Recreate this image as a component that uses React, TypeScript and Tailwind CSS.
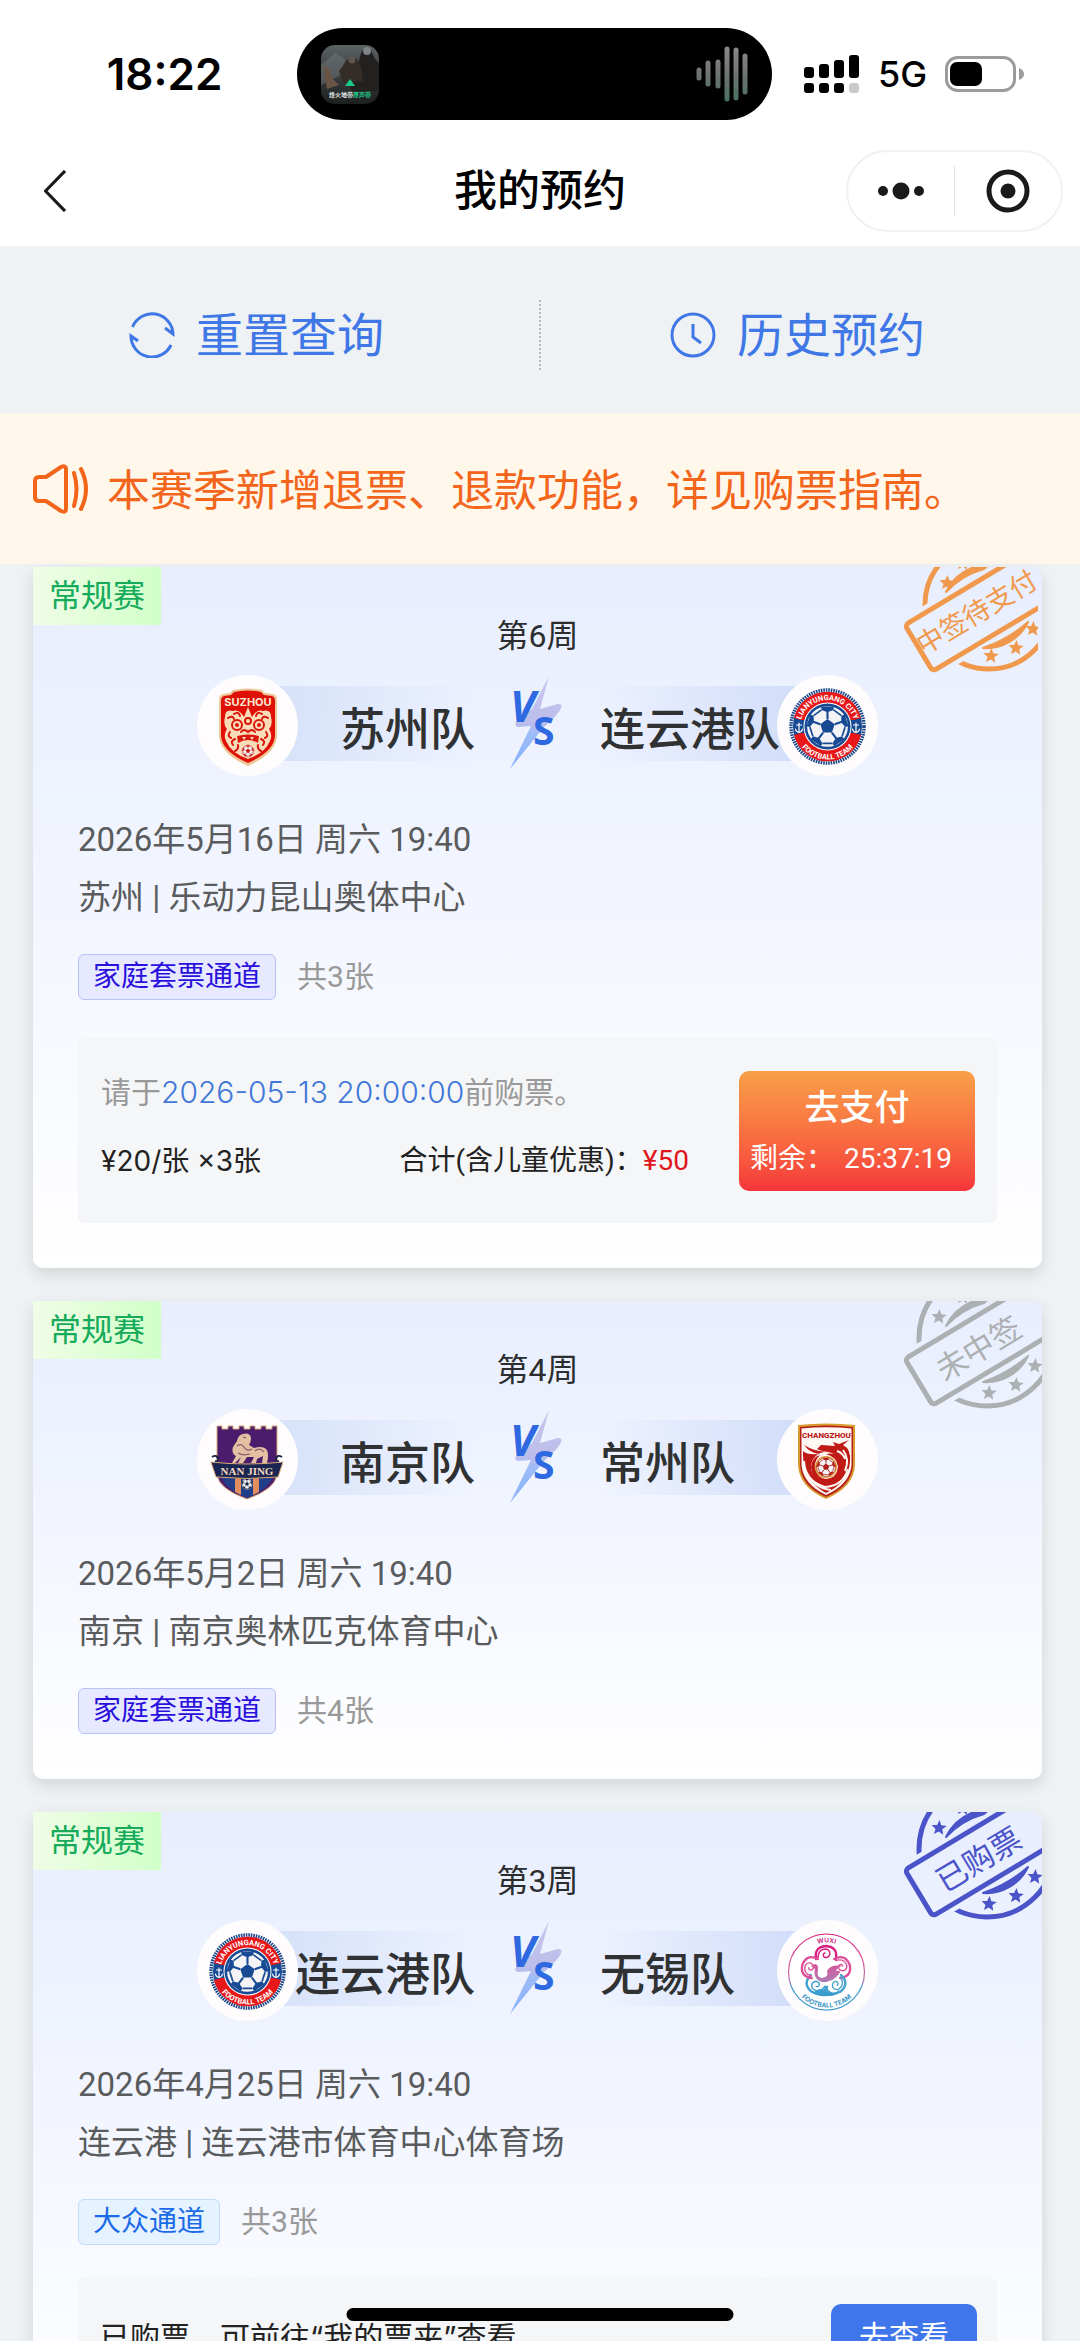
import React from "react";

type Team = "suzhou" | "lianyungang" | "nanjing" | "changzhou" | "wuxi";

const TEAM_NAMES: Record<Team, string> = {
  suzhou: "苏州队",
  lianyungang: "连云港队",
  nanjing: "南京队",
  changzhou: "常州队",
  wuxi: "无锡队",
};

/* ---------- Small drawings ---------- */

function Star({ x, y, r = 8 }: { x: number; y: number; r?: number }) {
  const pts = Array.from({ length: 10 }, (_, i) => {
    const a = ((-90 + 4 + i * 36) * Math.PI) / 180;
    const d = i % 2 ? r * 0.45 : r;
    return `${(x + d * Math.cos(a)).toFixed(1)},${(y + d * Math.sin(a)).toFixed(1)}`;
  });
  return <polygon points={pts.join(" ")} />;
}

function Ball({ cx, cy, r, ink }: { cx: number; cy: number; r: number; ink: string }) {
  const at = (d: number, deg: number) => {
    const a = (deg * Math.PI) / 180;
    return `${(cx + d * Math.cos(a)).toFixed(2)},${(cy + d * Math.sin(a)).toFixed(2)}`;
  };
  const dirs = [-90, -18, 54, 126, 198];
  return (
    <g>
      <circle cx={cx} cy={cy} r={r} fill="#f4f4f6" stroke={ink} strokeWidth={r * 0.06} />
      <polygon points={dirs.map((d) => at(r * 0.36, d)).join(" ")} fill={ink} />
      {dirs.map((d) => (
        <g key={d}>
          <polyline points={`${at(r * 0.36, d)} ${at(r * 0.72, d)}`} stroke={ink} strokeWidth={r * 0.1} fill="none" />
          <polygon
            points={`${at(r * 0.68, d)} ${at(r * 0.84, d + 20)} ${at(r, d + 17)} ${at(r, d - 17)} ${at(r * 0.84, d - 20)}`}
            fill={ink}
          />
          <polyline
            points={`${at(r * 0.84, d + 20)} ${at(r * 0.84, d + 52)}`}
            stroke={ink}
            strokeWidth={r * 0.08}
            fill="none"
          />
        </g>
      ))}
    </g>
  );
}

function SuzhouBadge() {
  return (
    <svg viewBox="0 0 101 101" className="size-full" role="img" aria-label="苏州">
      <path
        d="M36 15 Q50 12 65 15 L68 18 L76 19 Q80 20 80 25 V60 Q80 78 51 91 Q22 78 22 60 V25 Q22 20 26 19 L33 18 Z"
        fill="#ecc694"
      />
      <path
        d="M37 17 Q50 14 64 17 L67 20 L75 21 Q78 22 78 26 V60 Q78 76 51 88 Q24 76 24 60 V26 Q24 22 27 21 L34 20 Z"
        fill="#df1008"
      />
      <text x="51" y="31" textAnchor="middle" fontSize="11" fontWeight="700" fill="#fbe8cf" fontFamily="Inter">
        SUZHOU
      </text>
      <path
        d="M51 32 L55 42 Q60 34 66 36 Q74 34 74 42 Q76 50 72 54 Q76 60 73 66 Q68 78 51 84 Q34 78 29 66 Q26 60 30 54 Q26 50 28 42 Q28 34 36 36 Q42 34 47 42 Z"
        fill="#fbdcb8"
      />
      <g fill="none" stroke="#d8180c" strokeWidth="2" strokeLinecap="round">
        <circle cx="40" cy="50" r="5" />
        <circle cx="62" cy="50" r="5" />
        <circle cx="51" cy="46" r="3" />
        <path d="M31 43 Q36 40 37 44 M71 43 Q66 40 65 44 M37 39 Q42 36 43 41 M65 39 Q60 36 59 41" />
        <path d="M44 57 Q47 53 51 57 Q55 53 58 57 M33 57 Q30 61 34 63 M69 57 Q72 61 68 63" />
        <path d="M36 70 Q33 66 38 64 M66 70 Q69 66 64 64 M38 76 Q42 74 41 70 M64 76 Q60 74 61 70" />
      </g>
      <circle cx="40" cy="50" r="2" fill="#d8180c" />
      <circle cx="62" cy="50" r="2" fill="#d8180c" />
      <path d="M40 61 Q51 58 62 61 L61 68 Q51 62 41 68 Z" fill="#d8180c" />
      <path d="M45 62 l2 3 l2 -3 z M53 62 l2 3 l2 -3 z" fill="#fbdcb8" />
      <Ball cx={51} cy={76} r={6} ink="#c4150c" />
    </svg>
  );
}

function LianyungangBadge({ id }: { id: string }) {
  return (
    <svg viewBox="0 0 101 101" className="size-full" role="img" aria-label="连云港">
      <defs>
        <path id={`${id}-top`} d="M24 60 A27.500 27.500 0 1 1 77 60" />
        <path id={`${id}-bottom`} d="M17.500 51.500 A33 33 0 0 0 83.500 51.500" />
      </defs>
      <circle cx="50.500" cy="51.500" r="38.500" fill="#fff" />
      <circle cx="50.500" cy="51.500" r="36.500" fill="none" stroke="#1b4688" strokeWidth="3.500" strokeDasharray="1.600 0.900" />
      <circle cx="50.500" cy="51.500" r="34.500" fill="#164a94" />
      <path d="M17 43 A34.500 34.500 0 0 1 84 43 L77 45 H24 Z M17 60 A34.500 34.500 0 0 0 84 60 L77 58 H24 Z" fill="#e81719" />
      <circle cx="50.500" cy="51.500" r="24" fill="#fff" />
      <circle cx="50.500" cy="51.500" r="23" fill="#164a94" />
      <Ball cx={50.5} cy={51.5} r={21} ink="#174a93" />
      <g fill="#fff" fontFamily="Roboto" fontWeight="700">
        <text fontSize="7.500">
          <textPath href={`#${id}-top`} startOffset="50%" textAnchor="middle">
            LIANYUNGANG CITY
          </textPath>
        </text>
        <text fontSize="7.500">
          <textPath href={`#${id}-bottom`} startOffset="50%" textAnchor="middle">
            FOOTBALL TEAM
          </textPath>
        </text>
      </g>
      <g fill="none" stroke="#fff" strokeWidth="1.200" strokeLinecap="round">
        <path d="M22 48 V57 M19.500 50 H24.500 M18.500 54 Q19 57 22 57.500 Q25 57 25.500 54" />
        <path d="M79 48 V57 M76.500 50 H81.500 M75.500 54 Q76 57 79 57.500 Q82 57 82.500 54" />
      </g>
    </svg>
  );
}

function NanjingBadge() {
  return (
    <svg viewBox="0 0 101 101" className="size-full" role="img" aria-label="南京">
      <path
        d="M20 17 H25 V20 H31 V17 H36 V20 H42 V17 H47 V20 H53 V17 H58 V20 H64 V17 H69 V20 H75 V17 H80 V66 Q78 80 50 90 Q22 80 20 66 Z"
        fill="#4b1c6b"
        stroke="#d8a878"
        strokeWidth="1"
      />
      <path d="M24 66 H76 Q74 79 50 89 Q26 79 24 66 Z" fill="#213f88" />
      <path d="M38 66 H44 V86 L38 83 Z M56 66 H62 V83 L56 86 Z" fill="#e08e5e" />
      <Ball cx={50} cy={75} r={5.5} ink="#17233f" />
      <path
        d="M35 54 L39 47 Q34 44 36 38 L40 32 Q41 26 46 25 Q53 23 54 29 Q54 33 52 36 L57 39 Q66 36 70 41 Q72 46 70 54 H65 L66 47 L60 50 L59 54 H54 L57 48 H50 L46 54 H41 L44 48 L38 54 Z"
        fill="#e3c0a2"
      />
      <path
        d="M40 37 Q44 34 47 38 Q50 43 55 40 M46 28 L49 29 M58 42 Q63 38 67 43 M41 44 Q46 47 53 45"
        fill="none"
        stroke="#84596c"
        strokeWidth="1.200"
      />
      <path d="M15 48 Q20 45 21 50 Q21 53 18 52 M85 48 Q80 45 79 50 Q79 53 82 52" fill="none" stroke="#1a2348" strokeWidth="2" />
      <path d="M14 53 Q50 57 86 53 L81 68 Q50 71 19 68 Z" fill="#1b2551" stroke="#d8a878" strokeWidth="1" />
      <text x="50" y="66" textAnchor="middle" fontSize="11" fontWeight="700" fill="#f3d8bd" fontFamily="Liberation Serif">
        NAN JING
      </text>
    </svg>
  );
}

function ChangzhouBadge() {
  return (
    <svg viewBox="0 0 101 101" className="size-full" role="img" aria-label="常州">
      <path d="M21 16 Q49 13 78 16 V56 Q77 78 49 90 Q22 78 21 56 Z" fill="#d99a2e" />
      <path d="M23 18 Q49 15 76 18 V56 Q75 77 49 88 Q24 77 23 56 Z" fill="#b6201c" />
      <path d="M24.500 19.500 Q49 17 74.500 19.500 V56 Q73 75 49 86 Q26 75 24.500 56 Z" fill="#fff8f4" />
      <text x="49.500" y="29" textAnchor="middle" fontSize="8" fontWeight="800" fill="#ba1714" fontFamily="Roboto">
        CHANGZHOU
      </text>
      <path
        d="M26 47 Q27 72 49 84 Q72 73 73 52 Q74 40 66 36 L72 31 L62 35 L56 33 L58 37 L44 36 L40 40 L45 42 L52 42 Q40 44 27 36 Q33 44 42 45 Q30 46 26 42 Z"
        fill="#c01a17"
      />
      <circle cx="49" cy="58" r="15" fill="#fff8f4" />
      <path
        d="M49 45 Q63 42 66 56 Q66 72 50 74 Q35 73 34 58 Q35 48 43 46 Q37 52 38 59 Q40 69 49 70 Q60 69 61 58 Q60 48 49 45 Z"
        fill="#c01a17"
      />
      <path
        d="M27 52 Q28 72 48 78 Q66 77 71 60 M28 60 Q36 79 54 81 M66 41 Q73 50 68 62 M60 42 Q66 44 68 50"
        fill="none"
        stroke="#fff8f4"
        strokeWidth="2"
      />
      <circle cx="49" cy="58" r="11" fill="#e0a23c" />
      <Ball cx={49} cy={58} r={9.5} ink="#b3211c" />
    </svg>
  );
}

function WuxiBadge() {
  const petals: [number, number, number, string][] = [
    [49, 34, 0, "#d92080"],
    [65, 47, 72, "#de4f97"],
    [59, 65, 144, "#4aa3cf"],
    [39, 65, 216, "#3f9fce"],
    [33, 47, 288, "#de4f97"],
  ];
  return (
    <svg viewBox="0 0 101 101" className="size-full" role="img" aria-label="无锡">
      <defs>
        <linearGradient id="wuxi-ink" gradientUnits="userSpaceOnUse" x1="0" y1="14" x2="0" y2="90">
          <stop offset="0" stopColor="#d81b7c" />
          <stop offset="0.350" stopColor="#df4c94" />
          <stop offset="0.620" stopColor="#b07ab4" />
          <stop offset="0.700" stopColor="#3fa0cf" />
          <stop offset="1" stopColor="#2c8fc4" />
        </linearGradient>
        <path id="wuxi-top" d="M20 52 A29.500 29.500 0 0 1 79 52" />
        <path id="wuxi-bottom" d="M14 52 A35.500 35.500 0 0 0 85 52" />
      </defs>
      <circle cx="49.500" cy="52" r="38" fill="#fff" stroke="url(#wuxi-ink)" strokeWidth="1.200" />
      <g fill="none" strokeLinecap="round">
        {petals.map(([x, y, a, color]) => (
          <g key={a} transform={`translate(${x} ${y}) rotate(${a})`} stroke={color}>
            <path d="M-10 5 Q-12 -7 0 -8 Q12 -7 10 5" strokeWidth="2.400" />
            <path d="M-8 4 Q-8 -5 0 -5 Q4 -4 4 0 Q2 5 -2 3 Q-4 0 -1 -1" strokeWidth="1.400" />
          </g>
        ))}
      </g>
      <path
        d="M34 46 L38 44 Q42 45 41 50 Q39 57 45 58 Q52 57 50 51 Q54 44 65 46 Q60 48 59 51 Q66 50 61 55 Q57 60 52 61 Q46 64 41 60 Q36 56 38 49 Z"
        fill="url(#wuxi-ink)"
      />
      <path d="M36 73 Q43 66 49 71 Q57 76 63 69 Q60 77 50 76 Q42 77 36 73 Z" fill="url(#wuxi-ink)" />
      <g fontFamily="Inter" fontWeight="700" fontSize="6.500">
        <text fill="#cf2d86">
          <textPath href="#wuxi-top" startOffset="50%" textAnchor="middle">
            WUXI
          </textPath>
        </text>
        <text fill="#3a93c6">
          <textPath href="#wuxi-bottom" startOffset="50%" textAnchor="middle">
            FOOTBALL TEAM
          </textPath>
        </text>
      </g>
    </svg>
  );
}

function TeamBadge({ team, id }: { team: Team; id: string }) {
  return (
    <div className="relative z-10 size-[101px] shrink-0 rounded-full bg-[#fefcfd]">
      {team === "suzhou" && <SuzhouBadge />}
      {team === "lianyungang" && <LianyungangBadge id={id} />}
      {team === "nanjing" && <NanjingBadge />}
      {team === "changzhou" && <ChangzhouBadge />}
      {team === "wuxi" && <WuxiBadge />}
    </div>
  );
}

function Versus() {
  return (
    <svg viewBox="0 0 100 110" className="mb-1 h-[110px] w-[100px] shrink-0 self-center" role="img" aria-label="VS">
      <defs>
        <linearGradient id="bolt" x1="0" y1="0" x2="0" y2="1">
          <stop offset="0" stopColor="#c9c6ee" />
          <stop offset="0.500" stopColor="#bcbdea" />
          <stop offset="0.620" stopColor="#9dbcf8" />
          <stop offset="1" stopColor="#86b0fb" />
        </linearGradient>
      </defs>
      <path
        d="M61 7 L52 40 L70 35 Q75 35 73 39 Q71 45 56 58 L22 100 L43 57 L30 58 Q26 57 28 53 L44 40 Z"
        fill="url(#bolt)"
      />
      <g fill="#2f69e1" fontFamily="Noto Sans" fontWeight="700">
        <text x="22" y="53" fontSize="43" fontStyle="italic">
          V
        </text>
        <text x="45" y="76" fontSize="39">
          S
        </text>
      </g>
    </svg>
  );
}

type StampKind = "pending" | "lost" | "bought";

const STAMPS: Record<StampKind, { text: string; color: string; size: number; cx: number; cy: number; r: number }> = {
  pending: { text: "中签待支付", color: "#f0994d", size: 27, cx: 85, cy: 38, r: 64 },
  lost: { text: "未中签", color: "#adb0b2", size: 31, cx: 83, cy: 37, r: 68 },
  bought: { text: "已购票", color: "#4a54c8", size: 31, cx: 83, cy: 37, r: 68 },
};

function Stamp({ kind }: { kind: StampKind }) {
  const s = STAMPS[kind];
  const pending = kind === "pending";
  return (
    <svg
      viewBox={pending ? "0 0 134 110" : "0 0 138 110"}
      className={
        pending ? "absolute top-0 right-1 h-[110px] w-[134px]" : "absolute top-0 right-0 h-[110px] w-[138px]"
      }
      role="img"
      aria-label={s.text}
    >
      <mask id={`stamp-${kind}`}>
        <rect x="-50" y="-50" width="260" height="260" fill="#fff" />
        <rect x="-4" y="-7" width="200" height="68" fill="#000" transform="translate(1 58) rotate(-31)" />
      </mask>
      <g mask={`url(#stamp-${kind})`}>
        <circle cx={s.cx} cy={s.cy} r={s.r} fill="none" stroke={s.color} strokeWidth="5" />
      </g>
      <g fill={s.color}>
        <path d="M79 81 A46 46 0 0 0 124 55 A130 130 0 0 1 79 81 Z" stroke={s.color} strokeWidth="2" strokeLinejoin="round" />
        <path d="M42 25 Q54 0 87 -4 L80 2 Q58 8 42 25 Z" stroke={s.color} strokeWidth="2" strokeLinejoin="round" />
        <Star x={pending ? 43 : 35} y={16} />
        <Star x={pending ? 87 : 85} y={pending ? 89 : 92} />
        <Star x={112} y={pending ? 81 : 84} />
        <Star x={pending ? 129 : 131} y={pending ? 62 : 65} />
        <Star x={59} y={-4} />
      </g>
      <rect
        x="0"
        y="0"
        width="180"
        height="54"
        rx="4"
        transform="translate(1 58) rotate(-31)"
        fill="none"
        stroke={s.color}
        strokeWidth="5"
      />
      <text
        transform={`translate(${pending ? 73 : 75} ${pending ? 46 : 48}) rotate(-31)`}
        textAnchor="middle"
        dominantBaseline="central"
        fontSize={s.size}
        fill={s.color}
      >
        {s.text}
      </text>
    </svg>
  );
}

/* ---------- Header ---------- */

function StatusBar() {
  return (
    <div className="flex h-[92px] items-center pr-[11px]">
      <div className="flex-1 pl-8 text-center font-['Inter'] text-[44px] leading-none font-semibold">18:22</div>
      <div className="flex h-full w-[475px] items-center justify-between rounded-full bg-black pr-[22px] pl-6">
        <svg viewBox="0 0 58 59" className="h-[59px] w-[58px] rounded-[14px]">
          <defs>
            <linearGradient id="cover" x1="0" y1="0" x2="0" y2="1">
              <stop offset="0" stopColor="#5a6264" />
              <stop offset="0.500" stopColor="#3c3f3f" />
              <stop offset="1" stopColor="#1b1f1e" />
            </linearGradient>
          </defs>
          <rect width="58" height="59" fill="url(#cover)" />
          <path d="M0 20 L14 8 L24 14 L20 30 L0 40 Z" fill="#6f7779" opacity="0.500" />
          <path d="M40 8 Q44 0 50 5 L54 14 L58 18 V46 H30 L28 30 L36 24 Z" fill="#23211f" />
          <path d="M24 18 Q28 10 36 14 L40 22 L42 36 L22 38 L18 26 Z" fill="#332c27" />
          <path d="M2 20 L8 24 L12 34 L18 40 L6 44 Z" fill="#6a5446" />
          <circle cx="46" cy="6" r="4" fill="#7c8485" />
          <circle cx="31" cy="15" r="3.500" fill="#5f574f" />
          <path d="M29 34 L34 41 H24 Z" fill="#19c98a" />
          <text x="29" y="52" textAnchor="middle" fontSize="6" fontWeight="700" fill="#e8eeec">
            烽火地带
            <tspan fill="#1fd08f">原声带</tspan>
          </text>
        </svg>
        <svg viewBox="0 0 54 56" className="h-[56px] w-[54px]">
          <defs>
            <linearGradient id="wave" gradientUnits="userSpaceOnUse" x1="0" y1="0" x2="0" y2="56">
              <stop offset="0" stopColor="#8a8a88" />
              <stop offset="0.500" stopColor="#6f7371" />
              <stop offset="1" stopColor="#46705c" />
            </linearGradient>
          </defs>
          <g stroke="url(#wave)" strokeWidth="5" strokeLinecap="round">
            <path d="M3 24 V32" />
            <path d="M12 17 V38" />
            <path d="M22 16 V40" />
            <path d="M31 3 V53" />
            <path d="M40 4 V52" />
            <path d="M49 10 V46" />
          </g>
        </svg>
      </div>
      <div className="flex flex-1 items-center gap-[18px] pl-8">
        <svg viewBox="0 0 56 38" className="h-[38px] w-14" role="img" aria-label="信号">
          <g fill="#000">
            <rect x="0" y="12" width="10" height="11" rx="3" />
            <rect x="15" y="9" width="10" height="14" rx="3" />
            <rect x="30" y="5" width="10" height="18" rx="3" />
            <rect x="45" y="0" width="10" height="23" rx="3" />
            <rect x="0" y="28" width="10" height="10" rx="3" />
            <rect x="15" y="28" width="10" height="10" rx="3" />
            <rect x="30" y="28" width="10" height="10" rx="3" />
          </g>
          <rect x="45" y="28" width="10" height="10" rx="3" fill="#c9c9c9" />
        </svg>
        <span className="font-['Inter'] text-[36px] leading-none font-medium">5G</span>
        <svg viewBox="0 0 79 36" className="h-9 w-[79px]" role="img" aria-label="电量">
          <rect x="1.500" y="1.500" width="68" height="33" rx="11" fill="none" stroke="#9b9b9b" strokeWidth="3" />
          <rect x="5" y="6" width="32" height="24" rx="7" fill="#000" />
          <path d="M74 12 Q79 14 79 18 Q79 22 74 24 Z" fill="#9b9b9b" />
        </svg>
      </div>
    </div>
  );
}

function NavBar() {
  return (
    <div className="mt-[30px] grid grid-cols-[1fr_auto_1fr] items-center px-[17px]">
      <button type="button" aria-label="返回" className="justify-self-start pl-[26px]">
        <svg viewBox="0 0 24 42" className="h-[42px] w-6" fill="none" stroke="#1a1a1a" strokeWidth="3.200">
          <path d="M22 1 L2.500 21 L22 41" strokeLinejoin="round" />
        </svg>
      </button>
      <h1 className="text-[43px] leading-[60px] font-medium">我的预约</h1>
      <div className="flex h-[82px] w-[217px] items-center justify-self-end rounded-full border-2 border-[#f1f1f1]">
        <button type="button" aria-label="更多" className="flex flex-1 justify-center">
          <svg viewBox="0 0 48 18" className="h-[18px] w-12" fill="#1a1a1a">
            <circle cx="6" cy="9" r="5" />
            <circle cx="24" cy="9" r="8.500" />
            <circle cx="42" cy="9" r="5" />
          </svg>
        </button>
        <div className="h-[50px] w-px bg-[#e4e4e4]" />
        <button type="button" aria-label="关闭" className="flex flex-1 justify-center">
          <svg viewBox="0 0 44 44" className="size-11">
            <circle cx="22" cy="22" r="19" fill="none" stroke="#1a1a1a" strokeWidth="5" />
            <circle cx="22" cy="22" r="7.500" fill="#1a1a1a" />
          </svg>
        </button>
      </div>
    </div>
  );
}

function QuickActions() {
  return (
    <div className="flex h-[167px] items-center pt-2.5 text-[47px] leading-[60px] text-[#4077e6]">
      <button type="button" className="flex flex-1 items-center justify-center gap-[21px] pr-[26px]">
        <svg viewBox="0 0 46 46" className="size-[46px]" fill="none" stroke="currentColor" strokeWidth="3">
          <path d="M3.500 15 A21 21 0 0 1 44 22 L36 16" />
          <path d="M42 33 A21 21 0 0 1 2 24 L9 29" />
        </svg>
        <span className="pt-0.5">重置查询</span>
      </button>
      <div className="h-[70px] border-l-2 border-dotted border-[#b4b8bb]" />
      <button type="button" className="flex flex-1 items-center justify-center gap-[21px] pr-[26px]">
        <svg viewBox="0 0 46 46" className="size-[46px]" fill="none" stroke="currentColor" strokeWidth="3">
          <circle cx="23" cy="23" r="21" />
          <path d="M23 12 V25 L31 31" />
        </svg>
        <span className="pt-0.5">历史预约</span>
      </button>
    </div>
  );
}

function Notice() {
  return (
    <div className="flex h-[151px] items-center gap-[18px] bg-[#fff7ea] pl-[33px] text-[43px] leading-[60px] text-[#f2651b]">
      <svg
        viewBox="0 0 56 50"
        className="h-[50px] w-14"
        fill="none"
        stroke="currentColor"
        strokeWidth="4"
        strokeLinejoin="round"
        strokeLinecap="round"
      >
        <path d="M6 13 H13 L28 3 Q33 1 33 5 V45 Q33 49 28 47 L13 37 H6 Q2 37 2 33 V17 Q2 13 6 13 Z" />
        <path d="M41 9 Q46 25 41 42 M48 5 Q58 25 48 45" />
      </svg>
      <p className="pt-1">本赛季新增退票、退款功能，详见购票指南。</p>
    </div>
  );
}

/* ---------- Match cards ---------- */

interface Match {
  week: string;
  home: Team;
  away: Team;
  date: string;
  city: string;
  venue: string;
  channel: "family" | "public";
  count: string;
  stamp: StampKind;
}

const MATCHES: Match[] = [
  {
    week: "第6周",
    home: "suzhou",
    away: "lianyungang",
    date: "2026年5月16日 周六 19:40",
    city: "苏州",
    venue: "乐动力昆山奥体中心",
    channel: "family",
    count: "共3张",
    stamp: "pending",
  },
  {
    week: "第4周",
    home: "nanjing",
    away: "changzhou",
    date: "2026年5月2日 周六 19:40",
    city: "南京",
    venue: "南京奥林匹克体育中心",
    channel: "family",
    count: "共4张",
    stamp: "lost",
  },
  {
    week: "第3周",
    home: "lianyungang",
    away: "wuxi",
    date: "2026年4月25日 周六 19:40",
    city: "连云港",
    venue: "连云港市体育中心体育场",
    channel: "public",
    count: "共3张",
    stamp: "bought",
  },
];

function PaymentPanel() {
  return (
    <div className="mt-[38px] flex h-[185px] items-center justify-between rounded-md bg-[#f5f6f8] pr-[22px] pl-[23px]">
      <div className="w-[588px] pb-2">
        <p className="text-[30px] leading-[68px] text-[#999]">
          请于
          <time className="font-['Inter'] font-light text-[#4077d8]">2026-05-13 20:00:00</time>
          前购票。
        </p>
        <div className="flex justify-between text-[28px] leading-[68px] text-[#222]">
          <span className="font-['Inter','Noto_Sans_CJK_SC',sans-serif]">¥20/张 ×3张</span>
          <span>
            合计(含儿童优惠)：<strong className="font-normal text-[#e0161c]">¥50</strong>
          </span>
        </div>
      </div>
      <button
        type="button"
        className="flex h-[120px] w-[236px] flex-col items-center justify-center rounded-[10px] bg-linear-to-b from-[#f89f48] to-[#f5333b] pt-1.5 text-white"
      >
        <span className="text-[35px] leading-[50px] font-medium">去支付</span>
        <span className="flex gap-2.5 pr-3 text-[28px] leading-[50px]">
          <span>剩余：</span>
          <span>25:37:19</span>
        </span>
      </button>
    </div>
  );
}

function PurchasedPanel() {
  return (
    <div className="mt-[32px] flex items-start justify-between rounded-md bg-[#f5f6f8] py-[27px] pr-5 pl-[22px]">
      <p className="font-['Inter','Noto_Sans_CJK_SC',sans-serif] text-[30px] leading-[66px] text-[#222]">
        已购票，可前往“我的票夹”查看
      </p>
      <button type="button" className="w-[146px] rounded-[10px] bg-[#3f76ec] text-[30px] leading-[66px] text-white">
        去查看
      </button>
    </div>
  );
}

function MatchCard({ match }: { match: Match }) {
  return (
    <article className="relative overflow-hidden rounded-[10px] rounded-tl-none bg-linear-to-b from-[#e8eefe] via-[#f3f6ff] to-white px-[45px] pb-[45px] shadow-[0_6px_16px_rgba(0,0,0,0.12)]">
      <span className="absolute top-0 left-0 w-32 bg-linear-to-r from-[#f0fde6] to-[#d0ffc8] text-center text-[32px] leading-[58px] text-[#15ab5b]">
        常规赛
      </span>
      <Stamp kind={match.stamp} />
      <p className="pt-[49px] text-center text-[32px] leading-10 text-[#2b2d2e]">{match.week}</p>
      <div className="mt-[19px] flex h-[101px] items-center justify-center text-[45px] font-medium text-[#2f3132]">
        <TeamBadge team={match.home} id={`${match.stamp}-home`} />
        <div className="mb-1 -ml-[30px] h-[75px] w-[207px] bg-linear-to-r from-[#d5e1f9] to-transparent pt-[14px] text-right leading-[61px]">
          {TEAM_NAMES[match.home]}
        </div>
        <div className="flex w-[125px] justify-center">
          <Versus />
        </div>
        <div className="-mr-[30px] mb-1 h-[75px] w-[207px] bg-linear-to-l from-[#d0dcf9] to-transparent pt-[14px] leading-[61px]">
          {TEAM_NAMES[match.away]}
        </div>
        <TeamBadge team={match.away} id={`${match.stamp}-away`} />
      </div>
      <div className="mt-[35px] text-[33px] leading-[58px] text-[#595b5c]">
        <p>{match.date}</p>
        <p>
          {match.city} | {match.venue}
        </p>
      </div>
      <div className="mt-[27px] flex items-center gap-[21px]">
        {match.channel === "family" ? (
          <span className="rounded-md border border-[#b9c2f8] bg-[#e6e9ff] px-[14px] text-[28px] leading-[44px] text-[#2a10dc]">
            家庭套票通道
          </span>
        ) : (
          <span className="rounded-md border border-[#c3dbfb] bg-[#e4f3ff] px-[14px] text-[28px] leading-[44px] text-[#1b6ae8]">
            大众通道
          </span>
        )}
        <span className="text-[30px] leading-[44px] text-[#999]">{match.count}</span>
      </div>
      {match.stamp === "pending" && <PaymentPanel />}
      {match.stamp === "bought" && <PurchasedPanel />}
    </article>
  );
}

export default function App() {
  return (
    <div
      lang="zh-CN"
      className="h-screen overflow-hidden bg-[#eef2f4] font-['Roboto','Noto_Sans_CJK_SC',sans-serif] text-black"
    >
      <header className="bg-white pt-7 pb-[14px]">
        <StatusBar />
        <NavBar />
      </header>
      <QuickActions />
      <Notice />
      <main className="flex flex-col gap-[33px] pt-[3px] pr-[38px] pl-[33px]">
        {MATCHES.map((m) => (
          <MatchCard key={m.week} match={m} />
        ))}
      </main>
      <div className="fixed bottom-5 left-1/2 h-[13px] w-[387px] -translate-x-1/2 rounded-full bg-black" />
    </div>
  );
}
